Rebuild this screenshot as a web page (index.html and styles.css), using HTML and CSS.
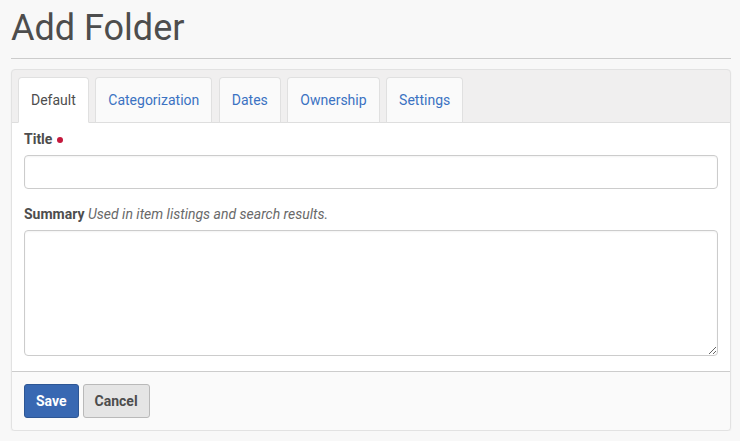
FILE: index.html
```html
<!DOCTYPE html>
<html>
<head>
<meta charset="utf-8">
<link rel="stylesheet" href="styles.css">
</head>
<body>
<div class="page">
  <h1 class="page-title">Add Folder</h1>
  <hr class="rule">
  <form class="panel">
    <nav class="tabs">
      <span class="tab active">Default</span>
      <a class="tab">Categorization</a>
      <a class="tab">Dates</a>
      <a class="tab">Ownership</a>
      <a class="tab">Settings</a>
    </nav>
    <div class="panel-body">
      <div class="field">
        <label class="label">Title <span class="required"></span></label>
        <input class="input" type="text">
      </div>
      <div class="field">
        <label class="label">Summary <span class="help">Used in item listings and search results.</span></label>
        <textarea class="textarea"></textarea>
      </div>
    </div>
    <div class="panel-footer">
      <button type="button" class="btn btn-primary">Save</button>
      <button type="button" class="btn btn-default">Cancel</button>
    </div>
  </form>
</div>
</body>
</html>
```

FILE: styles.css
```css
* { box-sizing: border-box; }
html, body { margin: 0; padding: 0; }
body {
  background: #f8f8f8;
  font-family: Roboto, "Liberation Sans", sans-serif;
  color: #4d4d4d;
  font-size: 14px;
}
.page {
  width: 720px;
  margin-left: 11px;
}
.page-title {
  margin: 0;
  padding-top: 6px;
  font-size: 36px;
  font-weight: 400;
  line-height: 44px;
  color: #4d4d4d;
}
.rule {
  margin: 8px 0 0 0;
  border: 0;
  border-top: 1px solid #cccccc;
  height: 0;
}
.panel {
  margin-top: 10px;
  border: 1px solid #e2e2e2;
  border-radius: 4px;
  background: #f0efef;
  box-shadow: 0 1px 2px rgba(0,0,0,0.06);
  overflow: hidden;
}
.tabs {
  display: flex;
  gap: 6.5px;
  padding: 7px 6px 0 6px;
  border-bottom: 1px solid #dedede;
}
.tab {
  display: flex;
  align-items: center;
  height: 46px;
  padding: 0 12px 1px 12px;
  margin-bottom: -1px;
  border: 1px solid #e0e0e0;
  border-bottom-color: #dedede;
  border-radius: 4px 4px 0 0;
  background: #fafafa;
  color: #3b72c2;
  font-size: 14px;
  text-decoration: none;
}
.tab.active {
  background: #ffffff;
  color: #4d4d4d;
  border-bottom-color: #ffffff;
}
.panel-body {
  background: #ffffff;
  padding: 6px 12px 15px 12px;
  border-bottom: 1px solid #cccccc;
}
.field + .field { margin-top: 15px; }
.label {
  display: block;
  font-weight: 700;
  line-height: 20px;
  margin-bottom: 6px;
  color: #4d4d4d;
}
.required {
  display: inline-block;
  width: 6px;
  height: 6px;
  border-radius: 50%;
  background: #c4183c;
  vertical-align: 1px;
  margin-left: 1px;
}
.help {
  font-weight: 400;
  font-style: italic;
  color: #696969;
}
.input, .textarea {
  display: block;
  width: 100%;
  border: 1px solid #cccccc;
  border-radius: 4px;
  background: #ffffff;
  box-shadow: inset 0 1px 2px rgba(0,0,0,0.05);
  font-family: inherit;
  font-size: 14px;
}
.input { height: 34px; }
.textarea { height: 126px; resize: vertical; }
.panel-footer {
  background: #fafafa;
  padding: 12px 12px 12px 12px;
  display: flex;
  gap: 4px;
}
.btn {
  height: 34px;
  padding: 0 11px;
  border-radius: 3px;
  font-family: inherit;
  font-size: 14px;
  font-weight: 700;
  cursor: pointer;
}
.btn-primary {
  background: #3868b2;
  border: 1px solid #2d5694;
  color: #ffffff;
}
.btn-default {
  background: #e5e5e5;
  border: 1px solid #b9b9b9;
  color: #4d4d4d;
}
```
